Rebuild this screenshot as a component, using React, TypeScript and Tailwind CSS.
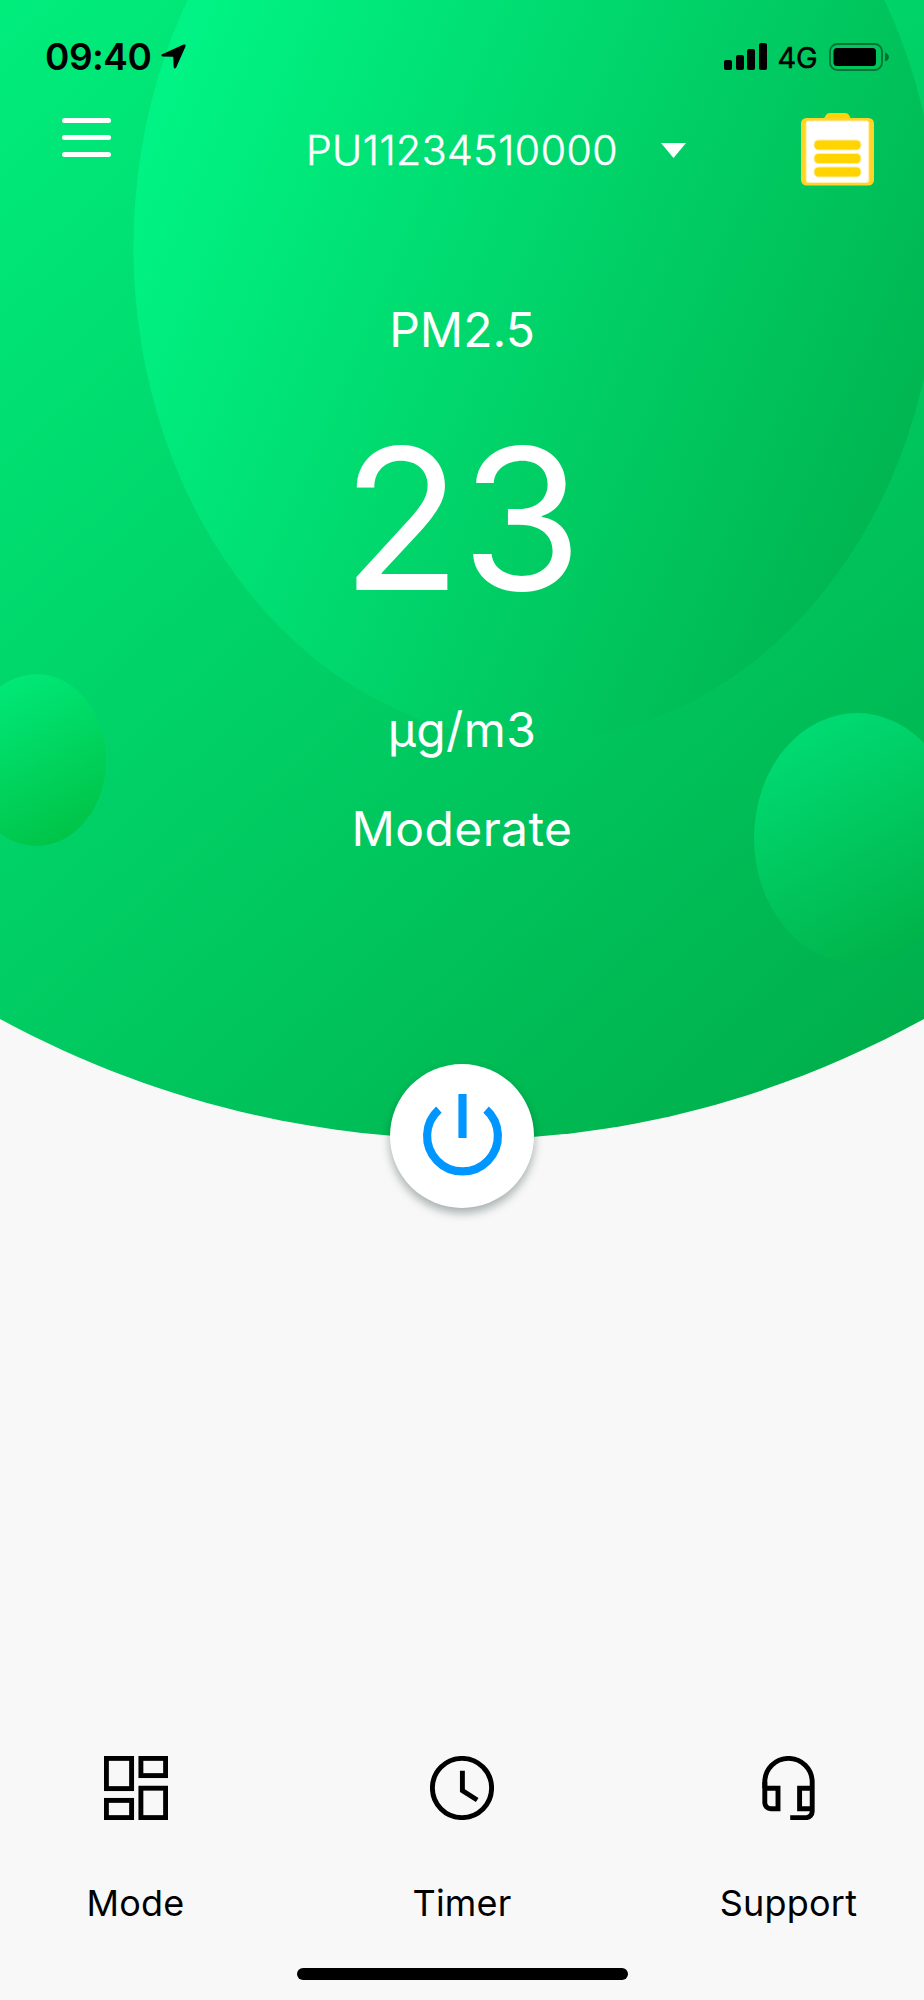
import { ReactNode } from 'react'

export default function App() {
  return (
    <div className="relative flex flex-col w-[924px] h-[2000px] overflow-hidden bg-[#f8f8f8] font-['Inter',sans-serif]">
      <Backdrop />

      <div className="relative flex flex-col h-full">
        <StatusBar />

        {/* Header */}
        <div className="flex h-[74px] items-center pl-[62px] pr-[50px] text-white">
          <div className="flex flex-col gap-3 w-[49px] -mt-[25px]">
            <div className="h-[5px] rounded-full bg-white" />
            <div className="h-[5px] rounded-full bg-white" />
            <div className="h-[5px] rounded-full bg-white" />
          </div>
          <div className="ml-[192px] mt-px w-[318px] text-center text-[41px] leading-none font-light tracking-[0.5px] whitespace-nowrap [-webkit-text-stroke:0.5px_white]">
            PU11234510000
          </div>
          <svg className="ml-[40px]" width="25" height="15" viewBox="0 0 25 15">
            <path d="M0 0H25L12.5 15Z" fill="#fff" />
          </svg>
          <Clipboard />
        </div>

        {/* Reading */}
        <div className="flex flex-col items-center text-white text-5xl leading-none">
          <p className="mt-[119px] leading-none">PM2.5</p>
          <p className="mt-[67px] text-[196px] leading-none">23</p>
          <p className="mt-[89px] leading-none tracking-[0.4px]">µg/m3</p>
          <p className="mt-[51px] leading-none tracking-[0.4px]">Moderate</p>
        </div>

        {/* Power */}
        <button className="mt-[211px] self-center grid place-content-center size-36 rounded-full bg-white shadow-[0_5px_10px_rgba(20,40,40,0.36)]">
          <svg width="84" height="88" viewBox="-42.5 -44 84 88" fill="none" stroke="#0096ff" strokeWidth="8.2">
            <path d="M-23.6 -26.4A35.4 35.4 0 1 0 23.6 -26.4" />
            <path d="M0 -42V2" />
          </svg>
        </button>

        {/* Bottom nav */}
        <div className="mt-auto flex justify-between px-[35.5px] text-black">
          <NavItem label="Mode">
            <rect x="2.4" y="2.4" width="25.2" height="30.2" />
            <rect x="36.9" y="2.4" width="24.7" height="17.2" />
            <rect x="2.4" y="44.4" width="25.2" height="17.2" />
            <rect x="36.9" y="32.2" width="24.7" height="29.4" />
          </NavItem>
          <NavItem label="Timer">
            <circle cx="32" cy="32" r="29.6" />
            <path d="M32.4 14.7V34.6L47.2 44" />
          </NavItem>
          <NavItem label="Support">
            <path d="M7.8 32.3V26A23.7 23.6 0 0 1 55.2 26V55.6a6 6 0 0 1 -6 6H33.2" />
            <path d="M7.8 26V46.8a6 6 0 0 0 6 6H21V32.3H7.8" />
            <path d="M55.2 32.3H42.6V52.8H55.2" />
          </NavItem>
        </div>

        {/* Home indicator */}
        <div className="mt-[47px] mb-5 self-center w-[331px] h-[12.5px] rounded-full bg-black" />
      </div>
    </div>
  )
}

function StatusBar() {
  return (
    <div className="flex h-[113px] items-center pl-[45px] pr-[35.5px] text-black">
      <span className="w-[107px] text-[37px] leading-none font-semibold tracking-[-0.5px] whitespace-nowrap">09:40</span>
      <svg className="ml-[9px]" width="25" height="25" viewBox="0 0 25 25">
        <path
          d="M1.2 10.2L22.6 0.6Q25 0 24.5 2.4L15.2 23.4Q13.6 25.8 12.6 23L12.3 12.8L1.8 12.5Q-0.9 11.6 1.2 10.2Z"
          fill="#000"
        />
      </svg>

      <div className="ml-auto flex items-end gap-[3.7px] h-[27px]">
        <div className="w-2 h-[10px] rounded-[2px] bg-black" />
        <div className="w-2 h-[15px] rounded-[2px] bg-black" />
        <div className="w-2 h-[21px] rounded-[2px] bg-black" />
        <div className="w-2 h-[27px] rounded-[2px] bg-black" />
      </div>
      <span className="ml-[10px] mt-[2px] w-[41px] text-center text-[29px] leading-none tracking-[-0.3px] [-webkit-text-stroke:0.5px_black]">4G</span>
      <svg className="ml-[10.5px]" width="60" height="28" viewBox="0 0 60 28">
        <rect x="1" y="1" width="52" height="26" rx="7.5" fill="none" stroke="#000" strokeOpacity="0.42" strokeWidth="1.8" />
        <rect x="4.5" y="5" width="42.5" height="18" rx="3.5" fill="#000" />
        <path d="M56 9.5Q59.8 11 59.8 14T56 18.5Z" fill="#000" fillOpacity="0.45" />
      </svg>
    </div>
  )
}

function Clipboard() {
  return (
    <svg className="ml-auto -mt-px" width="73" height="73" viewBox="0 0 73 73">
      <path d="M22 7L25 2Q26 0 29 0H44Q47 0 48 2L50.5 7Z" fill="#ffd400" />
      <rect y="5" width="73" height="67.5" rx="5.5" fill="#ffd428" />
      <rect x="5.2" y="8" width="62.5" height="61.5" rx="2" fill="#fff" stroke="#fff0b0" />
      <rect x="13" y="27" width="47" height="10" rx="4.5" fill="#ffd400" stroke="#ffefa8" />
      <rect x="13" y="40.5" width="47" height="10" rx="4.5" fill="#ffd400" stroke="#ffefa8" />
      <rect x="13" y="54" width="47" height="10" rx="4.5" fill="#ffd400" stroke="#ffefa8" />
    </svg>
  )
}

function NavItem({ label, children }: { label: string; children: ReactNode }) {
  return (
    <div className="flex flex-col items-center w-[200px]">
      <svg width="64" height="64" viewBox="0 0 64 64" fill="none" stroke="#000" strokeWidth="4.9">
        {children}
      </svg>
      <span className="mt-[65px] text-4xl leading-none tracking-[0.2px]">{label}</span>
    </div>
  )
}

// Green dome with the floating bubbles
function Backdrop() {
  return (
    <svg className="absolute left-0 top-0" width="924" height="1140" viewBox="0 0 924 1140">
      <defs>
        <linearGradient id="dome" gradientUnits="userSpaceOnUse" x1="0" y1="0" x2="950" y2="1050">
          <stop offset="0" stopColor="#00ed7c" />
          <stop offset="0.5" stopColor="#00cf65" />
          <stop offset="1" stopColor="#00ae4a" />
        </linearGradient>
        <linearGradient id="big" gradientUnits="userSpaceOnUse" x1="150" y1="150" x2="910" y2="475">
          <stop offset="0" stopColor="#00f384" />
          <stop offset="0.42" stopColor="#00d96e" />
          <stop offset="1" stopColor="#00b550" />
        </linearGradient>
        <linearGradient id="left" gradientUnits="userSpaceOnUse" x1="0" y1="685" x2="80" y2="830">
          <stop offset="0" stopColor="#00e878" />
          <stop offset="1" stopColor="#00c448" />
        </linearGradient>
        <linearGradient id="right" gradientUnits="userSpaceOnUse" x1="800" y1="735" x2="925" y2="950">
          <stop offset="0" stopColor="#00da72" />
          <stop offset="1" stopColor="#00b248" />
        </linearGradient>
      </defs>
      <path d="M0 0H924V1019C780 1098 625 1139 470 1139C310 1139 150 1100 0 1019Z" fill="url(#dome)" />
      <ellipse cx="536" cy="247" rx="402.5" ry="493" fill="url(#big)" />
      <ellipse cx="36.5" cy="760" rx="69.5" ry="86" fill="url(#left)" />
      <ellipse cx="857" cy="838" rx="103" ry="125" fill="url(#right)" />
    </svg>
  )
}
